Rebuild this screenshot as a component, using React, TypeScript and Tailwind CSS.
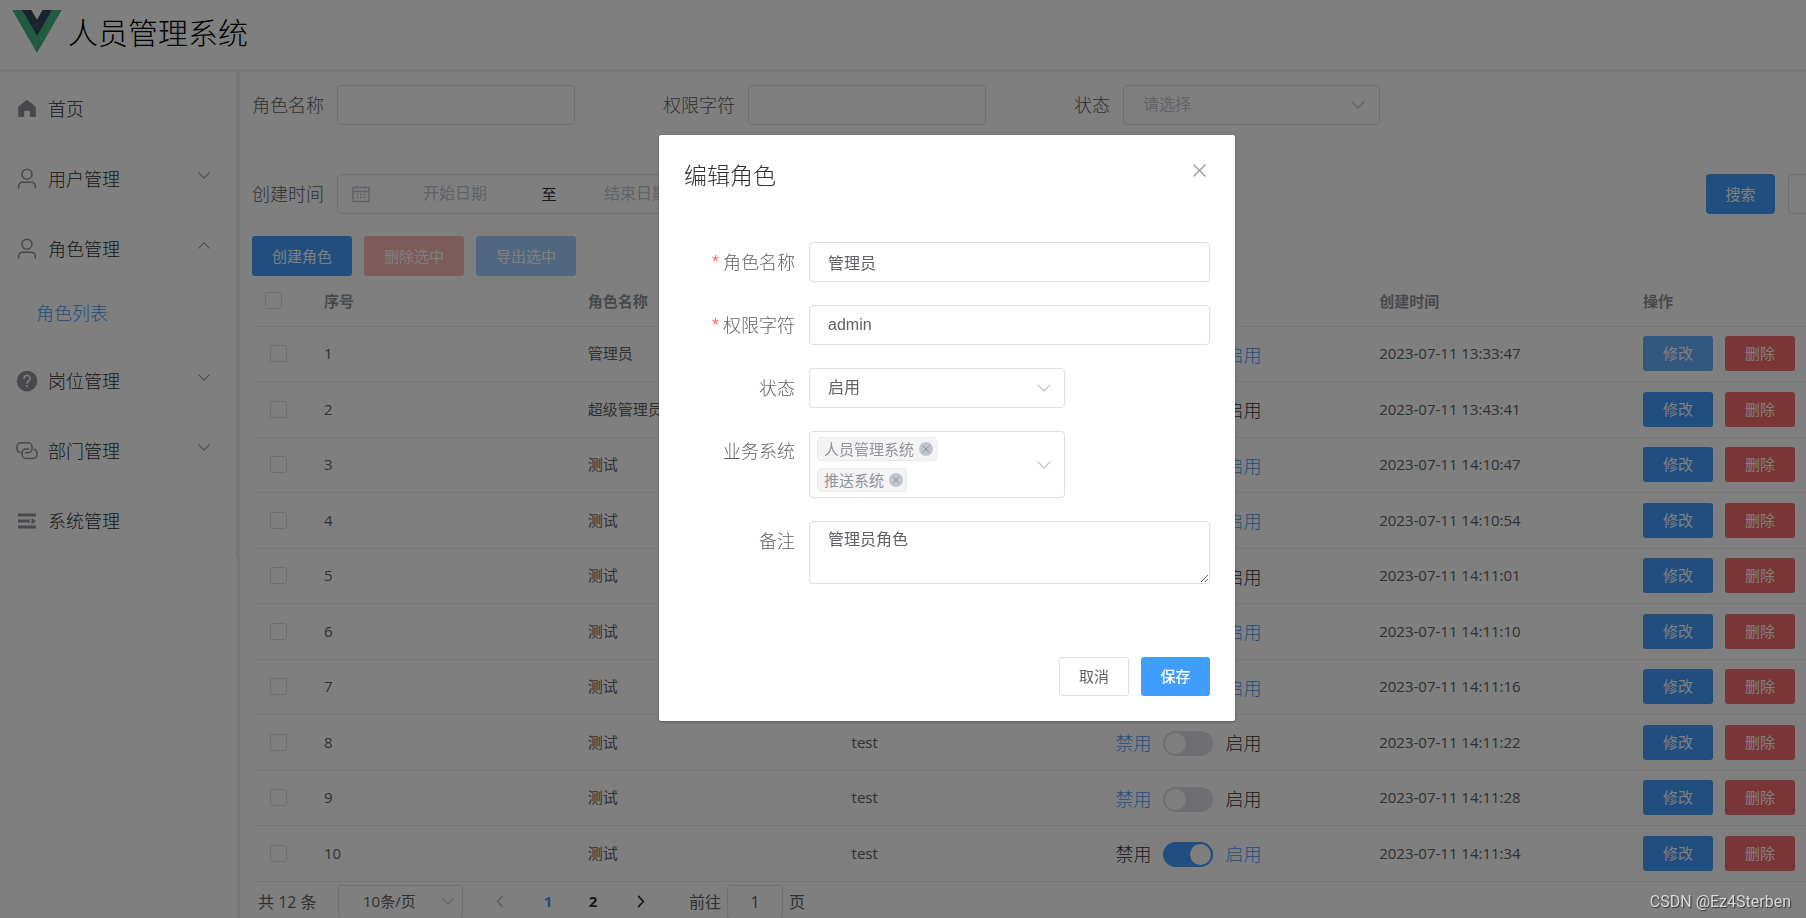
import type { ReactNode } from "react";

const systemFont = "font-['Open_Sans','Noto_Sans_CJK_SC',sans-serif]";
const fieldFont = "font-['Liberation_Sans','Noto_Sans_CJK_SC',sans-serif]";
const fieldBox = "rounded-[4px] border border-[#dcdfe6] bg-white text-[16px] text-[#606266]";

type Role = { id: number; name: string; code: string; enabled: boolean; created: string };

const roles: Role[] = [
  { id: 1, name: "管理员", code: "admin", enabled: true, created: "2023-07-11 13:33:47" },
  { id: 2, name: "超级管理员", code: "superAdmin", enabled: false, created: "2023-07-11 13:43:41" },
  { id: 3, name: "测试", code: "test", enabled: true, created: "2023-07-11 14:10:47" },
  { id: 4, name: "测试", code: "test", enabled: true, created: "2023-07-11 14:10:54" },
  { id: 5, name: "测试", code: "test", enabled: false, created: "2023-07-11 14:11:01" },
  { id: 6, name: "测试", code: "test", enabled: true, created: "2023-07-11 14:11:10" },
  { id: 7, name: "测试", code: "test", enabled: true, created: "2023-07-11 14:11:16" },
  { id: 8, name: "测试", code: "test", enabled: false, created: "2023-07-11 14:11:22" },
  { id: 9, name: "测试", code: "test", enabled: false, created: "2023-07-11 14:11:28" },
  { id: 10, name: "测试", code: "test", enabled: true, created: "2023-07-11 14:11:34" },
];

function Logo() {
  return (
    <svg viewBox="0 0 261.76 226.69" className="h-[43px] w-[50px]" aria-hidden="true">
      <path d="M161.096.001l-30.225 52.351L100.647.001H-.005l130.877 226.688L261.749.001z" fill="#41b883" />
      <path d="M161.096.001l-30.225 52.351L100.647.001H52.346l78.526 136.01L209.398.001z" fill="#34495e" />
    </svg>
  );
}

function Chevron({ className, up = false }: { className: string; up?: boolean }) {
  return (
    <svg viewBox="0 0 14 8" className={className} fill="none" stroke="currentColor" strokeWidth="1.2" strokeLinecap="round" strokeLinejoin="round" aria-hidden="true">
      <path d={up ? "M1 7l6-6 6 6" : "M1 1l6 6 6-6"} />
    </svg>
  );
}

function HomeIcon() {
  return (
    <svg viewBox="0 0 22 22" className="size-[22px]" fill="currentColor" aria-hidden="true">
      <path d="M11 1.800 2.700 8.200a1.200 1.200 0 0 0-.500 1v9.300c0 .300.200.500.500.500h5.500v-5.500c0-.300.200-.500.500-.500h4.600c.300 0 .500.200.500.500V19h5.500c.300 0 .500-.200.500-.500V9.200a1.200 1.200 0 0 0-.500-1z" />
    </svg>
  );
}

function UserIcon() {
  return (
    <svg viewBox="0 0 22 22" className="size-[22px]" fill="none" stroke="currentColor" strokeWidth="1.500" strokeLinecap="round" aria-hidden="true">
      <circle cx="11" cy="6.200" r="5" />
      <path d="M2.700 20v-2a3.800 3.800 0 0 1 3.800-3.800h9a3.800 3.800 0 0 1 3.800 3.800v2" />
    </svg>
  );
}

function QuestionIcon() {
  return (
    <svg viewBox="0 0 22 22" className="size-[22px]" aria-hidden="true">
      <circle cx="11" cy="11" r="10.300" fill="currentColor" />
      <path d="M8 8.400a3 3 0 1 1 4.700 2.400c-1 .700-1.700 1.100-1.700 2.400" fill="none" stroke="#fff" strokeWidth="1.600" strokeLinecap="round" />
      <circle cx="11" cy="16.200" r="1.100" fill="#fff" />
    </svg>
  );
}

function ConnectionIcon() {
  return (
    <svg viewBox="0 0 22 22" className="size-[22px]" fill="none" stroke="currentColor" strokeWidth="1.500" strokeLinecap="round" aria-hidden="true">
      <path d="M3.800 12.500A4 4 0 0 1 1 8.700V6.800a4 4 0 0 1 4-4h7a4 4 0 0 1 4 4v1.900a4 4 0 0 1-4 4H9.500" />
      <path d="M18.200 9.200a4 4 0 0 1 2.800 3.800v1.500a4 4 0 0 1-4 4h-7a4 4 0 0 1-4-4V13a4 4 0 0 1 4-4h2.500" />
    </svg>
  );
}

function UnfoldIcon() {
  return (
    <svg viewBox="0 0 22 22" className="size-[22px]" fill="currentColor" aria-hidden="true">
      <path d="M2 3.500h18v3H2zM2 9.500h12v3H2zM2 15.500h18v3H2zM15.500 7.800l4.500 3.200-4.500 3.200z" />
    </svg>
  );
}

function CalendarIcon() {
  return (
    <svg viewBox="0 0 18 18" className="size-[18px] text-[#c0c4cc]" fill="none" stroke="currentColor" aria-hidden="true">
      <path d="M1 2.500h16v14H1zM1 6.500h16M5 .500v3M13 .500v3" strokeWidth="1.400" />
      <path d="M4.500 9.500h2M8 9.500h2M11.500 9.500h2M4.500 12.500h2M8 12.500h2M11.500 12.500h2" strokeWidth="1.400" />
    </svg>
  );
}

function MenuItem({ icon, text, arrow }: { icon: ReactNode; text: string; arrow?: "up" | "down" }) {
  return (
    <li>
      <a href="#" className="flex h-[70px] items-center pr-[26px] pl-4 text-[18px] font-light text-[#303133]">
        <span className="text-[#909399]">{icon}</span>
        <span className="ml-[10px] flex-1">{text}</span>
        {arrow && <Chevron up={arrow === "up"} className="mb-[7px] h-[7px] w-3 text-[#909399]" />}
      </a>
    </li>
  );
}

function Sidebar() {
  return (
    <aside className="w-60 shrink-0 border-r-[3px] border-[#eeeeee] pt-[2px]">
      <ul className="border-r border-[#e6e6e6]">
        <MenuItem icon={<HomeIcon />} text="首页" />
        <MenuItem icon={<UserIcon />} text="用户管理" arrow="down" />
        <MenuItem icon={<UserIcon />} text="角色管理" arrow="up" />
        <li>
          <a href="#" className="flex h-[62px] items-center pb-[3px] pl-9 text-[18px] font-light text-[#409eff]">角色列表</a>
        </li>
        <MenuItem icon={<QuestionIcon />} text="岗位管理" arrow="down" />
        <MenuItem icon={<ConnectionIcon />} text="部门管理" arrow="down" />
        <MenuItem icon={<UnfoldIcon />} text="系统管理" />
      </ul>
    </aside>
  );
}

function Filters() {
  const label = "w-[85px] shrink-0 text-[18px] font-light text-[#606266]";
  return (
    <form className="flex flex-col gap-[49px]">
      <div className="grid grid-cols-4">
        <div className="flex items-center">
          <label htmlFor="filter-name" className={label}>角色名称</label>
          <input id="filter-name" className={`h-10 w-[238px] px-4 ${fieldBox} ${fieldFont}`} />
        </div>
        <div className="flex items-center">
          <label htmlFor="filter-code" className={label}>权限字符</label>
          <input id="filter-code" className={`h-10 w-[238px] px-4 ${fieldBox} ${fieldFont}`} />
        </div>
        <div className="flex items-center">
          <label htmlFor="filter-status" className="w-[49px] shrink-0 text-[18px] font-light text-[#606266]">状态</label>
          <div className="grid w-[257px] items-center">
            <select id="filter-status" defaultValue="" className={`col-start-1 row-start-1 h-10 appearance-none rounded-[4px] border border-[#dcdfe6] bg-white px-[19px] text-[16px] text-[#c0c4cc] ${fieldFont}`}>
              <option value="">请选择</option>
              <option value="1">启用</option>
              <option value="0">禁用</option>
            </select>
            <Chevron className="pointer-events-none col-start-1 row-start-1 mr-[15px] h-2 w-[14px] justify-self-end text-[#c0c4cc]" />
          </div>
        </div>
      </div>
      <div className="flex items-center pr-[38px]">
        <label htmlFor="filter-start" className={label}>创建时间</label>
        <div className="flex h-10 w-[385px] items-center rounded-[4px] border border-[#dcdfe6] bg-white pl-[14px]">
          <CalendarIcon />
          <input id="filter-start" placeholder="开始日期" className={`ml-[21px] w-32 text-center text-[16px] placeholder:text-[#c0c4cc] ${fieldFont}`} />
          <span className="w-[53px] pl-[7px] text-center text-[15px] text-[#303133]">至</span>
          <input aria-label="结束日期" placeholder="结束日期" className={`w-32 text-center text-[16px] placeholder:text-[#c0c4cc] ${fieldFont}`} />
        </div>
        <button type="button" className="ml-auto h-10 w-[69px] rounded-[4px] bg-[#409eff] text-[15px] text-white">搜索</button>
        <button type="button" className="ml-[13px] h-10 w-[70px] rounded-[4px] border border-[#dcdfe6] bg-white text-[15px] text-[#606266]">重置</button>
      </div>
    </form>
  );
}

function StatusSwitch({ role }: { role: Role }) {
  return (
    <label className="flex items-center gap-3 pt-[3px] text-[18px] font-light">
      <span className={role.enabled ? "text-[#303133]" : "text-[#409eff]"}>禁用</span>
      <input
        type="checkbox"
        role="switch"
        defaultChecked={role.enabled}
        className="h-[25px] w-[50px] appearance-none rounded-full bg-[#dcdfe6] p-[2px] before:block before:size-[21px] before:rounded-full before:bg-white checked:bg-[#409eff] checked:before:ml-[25px]"
      />
      <span className={role.enabled ? "text-[#409eff]" : "text-[#303133]"}>启用</span>
    </label>
  );
}

function RoleTable() {
  const box = "block size-[17px] appearance-none rounded-[2px] border border-[#dcdfe6] bg-white";
  return (
    <table className="w-full table-fixed border-b border-[#ebeef5] text-left text-[15px] text-[#606266]">
      <thead>
        <tr className="h-[50px] border-b border-[#ebeef5] font-bold text-[#909399]">
          <th className="w-[72px] pl-[13px]"><input type="checkbox" aria-label="全选" className={box} /></th>
          <th>序号</th>
          <th>角色名称</th>
          <th>权限字符</th>
          <th>状态</th>
          <th>创建时间</th>
          <th className="w-[253px]">操作</th>
        </tr>
      </thead>
      <tbody>
        {roles.map((role) => (
          <tr key={role.id} className="border-b border-[#ebeef5] odd:h-[55px] even:h-14">
            <td className="pl-[18px]"><input type="checkbox" aria-label={`选择 ${role.id}`} className={box} /></td>
            <td>{role.id}</td>
            <td>{role.name}</td>
            <td>{role.code}</td>
            <td><StatusSwitch role={role} /></td>
            <td>{role.created}</td>
            <td>
              <div className="flex gap-3">
                <button className={`h-[35px] w-[70px] rounded-[3px] text-white ${role.id === 1 ? "bg-[#66b1ff]" : "bg-[#409eff]"}`}>修改</button>
                <button className="h-[35px] w-[70px] rounded-[3px] bg-[#f56c6c] text-white">删除</button>
              </div>
            </td>
          </tr>
        ))}
      </tbody>
    </table>
  );
}

function Pagination() {
  return (
    <nav className="flex items-center pt-[3px] pl-[6px] text-[15px] text-[#606266]" aria-label="分页">
      <span className="w-20 shrink-0 text-[16px]">共 12 条</span>
      <div className="grid w-[125px] items-center">
        <select aria-label="每页条数" className="col-start-1 row-start-1 h-[34px] appearance-none rounded-[3px] border border-[#dcdfe6] bg-white pl-6 text-[15px]">
          <option>10条/页</option>
        </select>
        <Chevron className="pointer-events-none col-start-1 row-start-1 mr-[9px] h-[7px] w-3 justify-self-end text-[#c0c4cc]" />
      </div>
      <button aria-label="上一页" className="ml-[13px] flex h-[34px] w-12 items-center justify-center text-[#c0c4cc]">
        <svg viewBox="0 0 8 14" className="h-[13px] w-2" fill="none" stroke="currentColor" strokeWidth="1.800" aria-hidden="true"><path d="M7 1 1.500 7 7 13" /></svg>
      </button>
      <button className="ml-[2px] h-[34px] w-11 font-bold text-[#409eff]">1</button>
      <button className="ml-px h-[34px] w-11 font-bold text-[#303133]">2</button>
      <button aria-label="下一页" className="ml-[2px] flex h-[34px] w-12 items-center justify-center text-[#303133]">
        <svg viewBox="0 0 8 14" className="h-[13px] w-2" fill="none" stroke="currentColor" strokeWidth="1.800" aria-hidden="true"><path d="M1 1l5.500 6L1 13" /></svg>
      </button>
      <label className="ml-6 flex items-center text-[16px]">
        前往
        <input defaultValue="1" className="mx-[6px] h-[34px] w-14 rounded-[3px] border border-[#dcdfe6] bg-white text-center text-[16px]" />
        页
      </label>
    </nav>
  );
}

function Tag({ text }: { text: string }) {
  return (
    <span className="flex h-6 items-center gap-[5px] rounded-[4px] border border-[#e9e9eb] bg-[#f4f4f5] pr-[3px] pl-[6px] text-[15px] leading-5 text-[#909399]">
      {text}
      <button type="button" aria-label={`移除 ${text}`} className="flex size-[14px] items-center justify-center rounded-full bg-[#c0c4cc]">
        <svg viewBox="0 0 8 8" className="size-2" stroke="#909399" strokeWidth="1" aria-hidden="true"><path d="M.500.500l7 7M7.500.500l-7 7" /></svg>
      </button>
    </span>
  );
}

function FormRow({ label, htmlFor, required, children }: { label: string; htmlFor?: string; required?: boolean; children: ReactNode }) {
  const content = (
    <>
      {required && <span className="mr-1 font-['Liberation_Sans',sans-serif] text-[#f56c6c]" aria-hidden="true">*</span>}
      {label}
    </>
  );
  const style = "flex h-10 w-[111px] shrink-0 items-center justify-end text-[18px] font-light text-[#606266]";
  return (
    <div className="flex items-start gap-[14px]">
      {htmlFor ? <label htmlFor={htmlFor} className={style}>{content}</label> : <span className={style}>{content}</span>}
      {children}
    </div>
  );
}

function EditDialog() {
  return (
    <div className="fixed inset-0 flex items-start justify-center bg-black/50 pt-[135px] pl-[88px]">
      <section role="dialog" aria-modal="true" aria-labelledby="dialog-title" className="w-[576px] rounded-[2px] bg-white px-[25px] pb-[25px] shadow-[0_1px_3px_rgba(0,0,0,0.3)]">
        <header className="flex items-start justify-between pt-6">
          <h2 id="dialog-title" className="text-[23px] leading-8 font-light text-[#303133]">编辑角色</h2>
          <button aria-label="关闭" className="mt-px p-1 text-[#909399]">
            <svg viewBox="0 0 13 13" className="size-[13px]" stroke="currentColor" strokeWidth="1.200" aria-hidden="true"><path d="M.500.500l12 12M12.500.500l-12 12" /></svg>
          </button>
        </header>
        <form className="mt-[51px] flex flex-col gap-[23px]">
          <FormRow label="角色名称" htmlFor="role-name" required>
            <input id="role-name" defaultValue="管理员" className={`h-10 min-w-0 flex-1 px-[18px] ${fieldBox} ${fieldFont}`} />
          </FormRow>
          <FormRow label="权限字符" htmlFor="role-code" required>
            <input id="role-code" defaultValue="admin" className={`h-10 min-w-0 flex-1 px-[18px] ${fieldBox} ${fieldFont}`} />
          </FormRow>
          <FormRow label="状态" htmlFor="role-status">
            <div className="grid w-64 items-center">
              <select id="role-status" className={`col-start-1 row-start-1 h-10 appearance-none px-[18px] ${fieldBox} ${fieldFont}`}>
                <option>启用</option>
                <option>禁用</option>
              </select>
              <Chevron className="pointer-events-none col-start-1 row-start-1 mr-[14px] h-2 w-[14px] justify-self-end text-[#c0c4cc]" />
            </div>
          </FormRow>
          <FormRow label="业务系统">
            <div className={`flex w-64 items-center justify-between py-[5px] pr-[13px] pl-[7px] ${fieldBox}`}>
              <div className="flex flex-col items-start gap-[7px]">
                <Tag text="人员管理系统" />
                <Tag text="推送系统" />
              </div>
              <button type="button" aria-label="展开业务系统" aria-haspopup="listbox" className="flex items-center">
                <Chevron className="h-2 w-[14px] text-[#c0c4cc]" />
              </button>
            </div>
          </FormRow>
          <FormRow label="备注" htmlFor="role-note">
            <textarea id="role-note" defaultValue="管理员角色" className={`block h-[63px] min-w-0 flex-1 resize px-[18px] py-[6px] leading-6 ${fieldBox} ${fieldFont}`} />
          </FormRow>
        </form>
        <footer className="mt-[73px] flex justify-end gap-3 text-[15px]">
          <button className="h-[39px] w-[70px] rounded-[3px] border border-[#dcdfe6] text-[#606266]">取消</button>
          <button className="h-[39px] w-[69px] rounded-[3px] bg-[#409eff] font-medium text-white">保存</button>
        </footer>
      </section>
    </div>
  );
}

export default function App() {
  return (
    <div className={`flex h-screen flex-col overflow-hidden bg-white ${systemFont}`}>
      <header className="flex h-[72px] shrink-0 items-start border-b-[3px] border-[#eeeeee] pt-[10px] pl-3">
        <Logo />
        <h1 className="ml-[6px] text-[30px] leading-[46px] font-light text-black">人员管理系统</h1>
      </header>
      <div className="flex min-h-0 flex-1">
        <Sidebar />
        <main className="min-w-0 flex-1 overflow-hidden pt-[13px] pl-3">
          <div className="min-w-[1644px]">
            <Filters />
            <div className="mt-[22px] flex gap-3 text-[15px] text-white">
              <button className="h-10 w-[100px] rounded-[3px] bg-[#409eff]">创建角色</button>
              <button disabled className="h-10 w-[100px] rounded-[3px] bg-[#fab6b6]">删除选中</button>
              <button disabled className="h-10 w-[100px] rounded-[3px] bg-[#a0cfff]">导出选中</button>
            </div>
            <RoleTable />
            <Pagination />
          </div>
        </main>
      </div>
      <EditDialog />
      <div className="pointer-events-none fixed right-[15px] bottom-1 font-['Roboto',sans-serif] text-[16px] leading-6 text-[#d8d8d8] [text-shadow:1px_1px_1px_rgba(0,0,0,0.6)]">CSDN @Ez4Sterben</div>
    </div>
  );
}
